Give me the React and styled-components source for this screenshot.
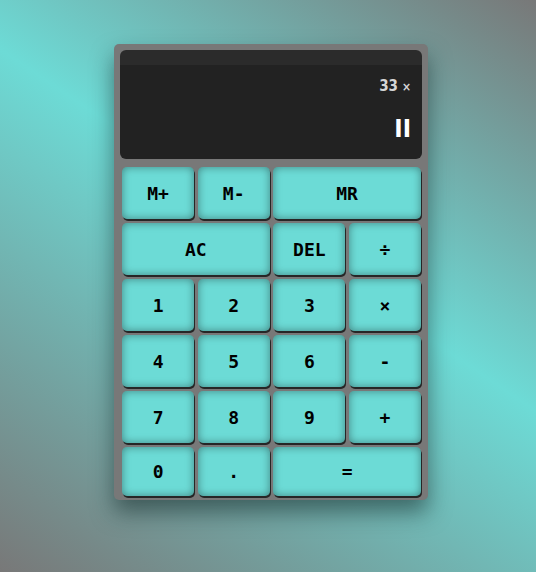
import React from "react";
import styled, { createGlobalStyle } from "styled-components";

const GlobalStyle = createGlobalStyle`
  * {
    box-sizing: border-box;
  }
  html,
  body {
    margin: 0;
    height: 100%;
  }
  body {
    background: linear-gradient(34deg, #787878 0%, #6ddbd6 56%, #787878 100%);
    font-family: "DejaVu Sans Mono", monospace;
  }
`;

const Page = styled.main`
  min-height: 572px;
  padding: 44px 0 0 114px;
`;

const Calculator = styled.div`
  width: 314px;
  padding: 6px 6px 4px;
  background: #787878;
  border-radius: 5px;
  box-shadow: 0 12px 22px rgba(20, 40, 40, 0.55);
`;

const Display = styled.div`
  height: 109px;
  border-radius: 6px;
  background: linear-gradient(#2b2b2b 0, #2b2b2b 15px, #222 15px);
  padding: 27px 11px 0 0;
  display: flex;
  flex-direction: column;
  align-items: flex-end;
`;

const Previous = styled.div`
  font-family: "DejaVu Sans Condensed", "DejaVu Sans", sans-serif;
  font-weight: bold;
  font-size: 15px;
  line-height: 18px;
  color: #d6d6d6;

  span {
    font-size: 12px;
    margin-left: 4px;
  }
`;

const Current = styled.div`
  margin-top: 19px;
  font-family: "DejaVu Sans Condensed", "DejaVu Sans", sans-serif;
  font-weight: bold;
  font-size: 25px;
  line-height: 28px;
  color: #fff;
`;

const Keys = styled.div`
  margin-top: 8px;
  padding: 0 1px 0 2px;
  display: grid;
  grid-template-columns: repeat(4, 1fr);
  grid-template-rows: repeat(5, 52px) 49px;
  column-gap: 3.5px;
  row-gap: 4px;
`;

const Key = styled.button`
  grid-column: span ${(p) => p.$span || 1};
  border: none;
  border-radius: 5px;
  background: #6cdbd6;
  color: #000;
  font-family: "DejaVu Sans Mono", monospace;
  font-weight: bold;
  font-size: 18px;
  cursor: pointer;
  box-shadow: inset 0 0 8px rgba(0, 0, 0, 0.4), 1px 2px 0 #262626;
`;

const keys = [
  ["M+"],
  ["M-"],
  ["MR", 2],
  ["AC", 2],
  ["DEL"],
  ["÷"],
  ["1"],
  ["2"],
  ["3"],
  ["×"],
  ["4"],
  ["5"],
  ["6"],
  ["-"],
  ["7"],
  ["8"],
  ["9"],
  ["+"],
  ["0"],
  ["."],
  ["=", 2],
];

const App = () => {
  return (
    <Page>
      <GlobalStyle />
      <Calculator>
        <Display>
          <Previous>
            33<span>×</span>
          </Previous>
          <Current>II</Current>
        </Display>
        <Keys>
          {keys.map(([label, span]) => (
            <Key key={label} $span={span}>
              {label}
            </Key>
          ))}
        </Keys>
      </Calculator>
    </Page>
  );
};

export default App;
